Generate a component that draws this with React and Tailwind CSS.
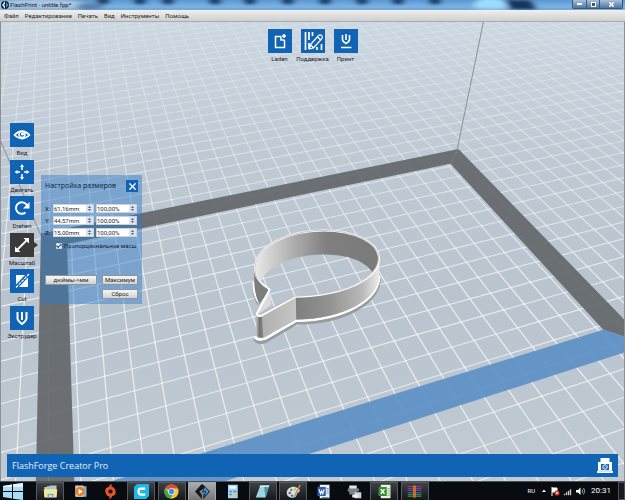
import { Check, X } from 'lucide-react'

// grid cell -> screen, perspective of the build plate
function project(i, j) {
  const u = (i + 0.2) / 20.4
  const v = (j + 0.2) / 12.4
  const w = 1 + 0.1779 * u - 0.3262 * v
  return [
    (463.5 * u - 16.7 * v + 67) / w,
    (-51.05 * u + 88.1 * v + 243.4) / w,
  ].map((n) => Math.round(n * 10) / 10)
}

const line = (a, b) => `M${project(...a)}L${project(...b)}`
const poly = (...pts) => pts.map((p) => project(...p).join(',')).join(' ')

const range = (from, to) => Array.from({ length: to - from + 1 }, (_, k) => from + k)
const columns = range(-8, 50).map((i) => line([i, -40], [i, 19])).join('')
const rows = range(-40, 19).map((j) => line([-8, j], [50, j])).join('')

const IN = [-0.2, 20.2, -0.2, 12.2]
const OUT = [-1.38, 21.38, -1.38, 13.38]

const menu = ['Файл', 'Редактирование', 'Печать', 'Вид', 'Инструменты', 'Помощь']

function Cutter() {
  return (
    <g transform="translate(235 215) scale(.3333)" strokeLinejoin="round">
      {/* bottom flange */}
      <path d="M57 208C56 235 62 252 71 266M433 190C432 262 330 322 185 323L92 378Q66 386 59 370" fill="none" stroke="#999b9c" strokeWidth="9" />
      <path d="M56 200C55 230 62 248 73 262M433 182C430 254 330 314 184 316L92 369Q66 377 60 364" fill="none" stroke="#fff" strokeWidth="7" />
      {/* inner back wall */}
      <path d="M60 160C66 92 160 45 265 45C360 45 431 80 431 130C431 150 425 165 415 175C395 138 340 117 265 117C180 117 100 150 80 195C68 184 60 172 60 160Z" fill="url(#inner)" />
      {/* left outside wall */}
      <path d="M58 165C62 190 80 210 104 224L73 265C60 240 56 210 58 165Z" fill="#7d7d7d" />
      <path d="M104 224L109 267L76 292L68 292Z" fill="#dcdcdc" />
      {/* front wall */}
      <path d="M433 130C433 190 330 243 182 245L183 312C330 310 430 250 433 182Z" fill="url(#front)" />
      <path d="M182 245L80 302L84 366L184 312Z" fill="url(#tail)" />
      <path d="M63 300L81 302L85 366Q70 370 64 360Z" fill="url(#tip)" />
      {/* rim */}
      <path d="M104 222C80 208 58 185 60 155C65 90 160 45 265 45C360 45 432 80 432 130C430 190 330 240 180 244L80 300Q66 305 66 294Z" fill="none" stroke="#fff" strokeWidth="6" />
      <path d="M99 222C76 206 59 190 60 155C65 90 160 45 265 45C360 45 431 80 431 128C428 190 330 238 180 242L76 297" fill="none" stroke="#8d8d8d" strokeWidth="1.500" />
    </g>
  )
}

function Scene() {
  return (
    <svg className="absolute inset-0 h-full w-full" viewBox="0 21 625 460" preserveAspectRatio="xMidYMid slice" aria-hidden="true">
      <defs>
        <linearGradient id="floor" x1="0" y1="0" x2="0" y2="1">
          <stop offset="0" stopColor="#cbd7e1" />
          <stop offset=".3" stopColor="#bfc9d4" />
          <stop offset=".6" stopColor="#bac4cf" />
          <stop offset="1" stopColor="#c0cad2" />
        </linearGradient>
        <linearGradient id="grid" gradientUnits="userSpaceOnUse" x1="0" y1="21" x2="0" y2="300">
          <stop offset="0" stopColor="#fff" stopOpacity=".16" />
          <stop offset=".4" stopColor="#fff" stopOpacity=".34" />
          <stop offset="1" stopColor="#fff" stopOpacity=".66" />
        </linearGradient>
        <linearGradient id="inner">
          <stop offset="0" stopColor="#e8e8e8" />
          <stop offset=".3" stopColor="#b0b0b0" />
          <stop offset=".58" stopColor="#7f7f7f" />
          <stop offset="1" stopColor="#7a7a7a" />
        </linearGradient>
        <linearGradient id="front">
          <stop offset="0" stopColor="#7f7f7f" />
          <stop offset=".4" stopColor="#929292" />
          <stop offset=".8" stopColor="#bababa" />
          <stop offset="1" stopColor="#ececec" />
        </linearGradient>
        <linearGradient id="tail">
          <stop offset="0" stopColor="#b0b0b0" />
          <stop offset="1" stopColor="#c6c6c6" />
        </linearGradient>
        <linearGradient id="tip">
          <stop offset="0" stopColor="#c0c0c0" />
          <stop offset=".5" stopColor="#707070" />
          <stop offset="1" stopColor="#8a8a8a" />
        </linearGradient>
      </defs>
      <rect y="21" width="625" height="460" fill="url(#floor)" />
      <path d={columns} stroke="url(#grid)" strokeWidth="1.3" fill="none" />
      <path d={rows} stroke="url(#grid)" strokeWidth="1.1" fill="none" />
      {/* plate border */}
      <g fill="#64686c" fillOpacity=".93">
        <polygon points={poly([OUT[0], OUT[2]], [OUT[1], OUT[2]], [IN[1], IN[2]], [IN[0], IN[2]])} />
        <polygon points={poly([OUT[0], OUT[2]], [IN[0], IN[2]], [IN[0], IN[3]], [OUT[0], OUT[3]])} />
        <polygon points={poly([OUT[1], OUT[2]], [OUT[1], OUT[3]], [IN[1], IN[3]], [IN[1], IN[2]])} />
      </g>
      <polygon fill="#5a8fc4" fillOpacity=".9" points={poly([IN[0], IN[3]], [IN[1], IN[3]], [OUT[1], OUT[3]], [OUT[0], OUT[3]])} />
      <path d="M483.500 21L457 149.500M0 139L41 235" stroke="#8a9096" fill="none" />
      <path d="M48.500 470V481" stroke="#3fae4a" />
      <Cutter />
      <path d="M.5 21V481M624.500 21V481" stroke="#8b9196" />
    </svg>
  )
}

const icons = {
  load: <path d="M13 7.500H7.500V18.500H16.500V11M13 7.500V11H16.500M16 5V9M14 7H18" />,
  support: (
    <>
      <path d="M4.500 3V21M8 3V11M8 14V20M11.500 3V7M16 18V21M20.500 15V21" strokeWidth="1.700" />
      <path d="M8.500 20L9.500 15.500L17.500 6.500Q19.500 5 21 7Q22 8.500 20.500 10L12.500 19ZM9.500 15.500L12.500 19M16.500 7.500L19.500 11" strokeWidth="1.200" />
    </>
  ),
  print: <path d="M8.500 6V10.500Q8.500 12.500 12 14.500Q15.500 12.500 15.500 10.500V6M12 5V11M7 18.500H17.500" strokeWidth="1.600" />,
  view: (
    <>
      <path d="M4.500 12Q12 4.500 19.500 12Q12 19 4.500 12Z" strokeWidth="1.700" />
      <circle cx="12" cy="11.500" r="3" />
      <circle cx="12.500" cy="11" r=".8" fill="white" />
    </>
  ),
  move: (
    <>
      <path d="M12 6V10M12 14V18M6 12H10M14 12H18" />
      <path d="M12 4L14 7H10ZM12 20L14 17H10ZM4.500 12L7.500 10V14ZM19.500 12L16.500 10V14Z" fill="white" stroke="none" />
    </>
  ),
  rotate: (
    <>
      <path d="M15.500 16.500A5.800 5.800 0 1 1 17.200 10" strokeWidth="2" />
      <path d="M19.500 6V12.500H13Z" fill="white" stroke="none" />
    </>
  ),
  scale: (
    <>
      <path d="M7.500 16.500L16.500 7.500" strokeWidth="1.800" />
      <path d="M19 5V10.500L13.500 5ZM5 19V13.500L10.500 19Z" fill="white" stroke="none" />
    </>
  ),
  cut: (
    <>
      <path d="M6 6H15L6 15.500ZM18 8.500V18H9Z" fill="white" stroke="none" />
      <path d="M6 18.500L19 5" strokeWidth="1.200" strokeDasharray="3 1" />
    </>
  ),
  extruder: <path d="M7.500 6V12.500Q7.500 14.500 12 18Q16.500 14.500 16.500 12.500V6M12 6V14" strokeWidth="2" />,
}

function Tool({ icon, label, active }) {
  return (
    <button type="button" className="relative flex w-[24px] flex-col items-center">
      <span className={active ? 'bg-[#3a3a3a]' : 'bg-[#1164b4]'}>
        <svg viewBox="0 0 24 24" className="block size-[24px]" fill="none" stroke="white" strokeWidth="1.500">
          {icons[icon]}
        </svg>
      </span>
      {active && <span className="absolute top-[9px] left-full border-y-3 border-l-4 border-y-transparent border-l-[#3a3a3a]" />}
      <span className="mt-[2px] text-[6px] leading-[8px] whitespace-nowrap text-[#15191d]">{label}</span>
    </button>
  )
}

function Spin({ label, value }) {
  return (
    <span className="flex h-[9px] min-w-0 flex-1 border border-[#c9d3dd] bg-white">
      <input type="text" aria-label={label} defaultValue={value} className="w-0 min-w-0 flex-1 text-[6px] leading-[7px] text-[#1c2733]" />
      <span className="flex w-[7px] flex-col bg-[#dfe3e8]">
        <button type="button" aria-label={`${label} +`} className="flex h-1/2 items-center justify-center">
          <svg viewBox="0 0 5 3" className="h-[2px] w-[3px]" fill="#3d5c9c"><path d="M0 3L2.500 0L5 3Z" /></svg>
        </button>
        <button type="button" aria-label={`${label} −`} className="flex h-1/2 items-center justify-center">
          <svg viewBox="0 0 5 3" className="h-[2px] w-[3px]" fill="#3d5c9c"><path d="M0 0L2.500 3L5 0Z" /></svg>
        </button>
      </span>
    </span>
  )
}

function PanelButton({ children, className = '' }) {
  return (
    <button type="button" className={`h-[10px] border border-[#8d959c] bg-linear-to-b from-[#f6f6f6] to-[#d2d2d2] text-[6px] leading-[8px] whitespace-nowrap text-[#222] ${className}`}>
      {children}
    </button>
  )
}

function SizePanel() {
  const fields = [['X', '61,16mm'], ['Y', '44,57mm'], ['Z', '15,00mm']]
  return (
    <section className="mt-[52px] ml-[7px] h-[129px] w-[101px] bg-[#2b7ac7]/45 px-[4px] pt-[4px]">
      <header className="flex items-center justify-between">
        <h2 className="font-['Open_Sans','Noto_Sans',sans-serif] text-[7px] leading-[14px] whitespace-nowrap text-[#0f2237]">Настройка размеров</h2>
        <button type="button" aria-label="Закрыть" className="flex size-[12px] items-center justify-center bg-[#1164b4]">
          <X size={11} strokeWidth={3} color="white" />
        </button>
      </header>
      <div className="mt-[11px] flex flex-col gap-[3px] pr-[1px]">
        {fields.map(([axis, value]) => (
          <div key={axis} className="flex items-center gap-[2px]">
            <span className="w-[6px] text-[6px] leading-[9px] text-[#0f2237]">{axis}:</span>
            <Spin label={axis} value={value} />
            <Spin label={`${axis} %`} value="100,00%" />
          </div>
        ))}
      </div>
      <label className="mt-[4px] ml-[11px] flex items-center gap-[2px] text-[6px] leading-[10px] whitespace-nowrap text-[#0f2237]">
        <span className="relative size-[6px] shrink-0">
          <input type="checkbox" defaultChecked className="peer block size-[6px] appearance-none border border-[#c3ccd6] bg-white" />
          <Check className="pointer-events-none absolute inset-0 hidden peer-checked:block" size={6} strokeWidth={5} color="#33549a" />
        </span>
        Пропорциональное масш
      </label>
      <div className="mt-[24px] grid grid-cols-[52px_36px] justify-between gap-y-[4px]">
        <PanelButton>дюймы-&gt;мм</PanelButton>
        <PanelButton>Максимум</PanelButton>
        <PanelButton className="col-start-2">Сброс</PanelButton>
      </div>
    </section>
  )
}

function TitleBar() {
  return (
    <header className="relative flex h-[10px] shrink-0 items-center overflow-hidden bg-[#78b1e6]">
      <svg className="absolute inset-0 h-full w-full" viewBox="0 0 625 10" preserveAspectRatio="none" aria-hidden="true">
        <defs>
          <linearGradient id="sky" x1="0" y1="0" x2="0" y2="1">
            <stop offset="0" stopColor="#5c96cf" />
            <stop offset="1" stopColor="#8dc4f3" />
          </linearGradient>
          <filter id="soft" x="-10%" y="-100%" width="120%" height="300%">
            <feGaussianBlur stdDeviation="3 1.500" />
          </filter>
        </defs>
        <rect width="625" height="10" fill="url(#sky)" />
        <g filter="url(#soft)">
          <ellipse cx="40" cy="5" rx="48" ry="6" fill="#a9c6e2" />
          <ellipse cx="90" cy="6" rx="14" ry="3" fill="#5a83ad" />
          {[103, 140, 168, 215, 250, 288, 325, 362, 398, 435].map((x) => (
            <ellipse key={x} cx={x} cy="1" rx="6" ry="3.500" fill="#173a63" />
          ))}
          <ellipse cx="490" cy="5" rx="16" ry="7" fill="#9bdcff" />
          <path d="M504 0H530L537 10H512Z" fill="#16355c" />
          <path d="M0 10H625V9H0Z" fill="#2c5f92" />
        </g>
      </svg>
      <svg className="relative ml-[1px] size-[8px]" viewBox="0 0 8 8" aria-hidden="true">
        <rect width="8" height="8" rx="4" fill="#0d1b29" />
        <path d="M4 0L1 4L4 8V5L3 4L4 3Z" fill="#dbe9f5" />
        <path d="M5 1L7.500 4L5 7Z" fill="#3a8fd6" />
      </svg>
      <h1 className="relative ml-[1px] text-[6px] leading-[10px] whitespace-nowrap text-[#0c1722]">FlashPrint - untitle.fpp*</h1>
      <div className="relative mr-[2px] ml-auto flex h-[9px] self-start rounded-b-xs border border-t-0 border-[#3c5876] bg-linear-to-b from-[#a9c1da] to-[#50779f]">
        <button type="button" aria-label="Свернуть" className="flex w-[14px] items-center justify-center border-r border-[#3c5876]">
          <span className="h-[2px] w-[5px] bg-white" />
        </button>
        <button type="button" aria-label="Развернуть" className="flex w-[13px] items-center justify-center border-r border-[#3c5876]">
          <span className="size-[5px] border border-white bg-[#3c5876]" />
        </button>
        <button type="button" aria-label="Закрыть окно" className="flex w-[22px] items-center justify-center">
          <X size={7} strokeWidth={5} color="white" />
        </button>
      </div>
    </header>
  )
}

const tasks = [
  {
    name: 'Проводник', open: true, art: (
      <>
        <path d="M2 4H8L9 2H18V17H2Z" fill="#e9c964" />
        <path d="M5 3H16V9H5Z" fill="#8fd0ea" />
        <path d="M1 7H19L18 18H2Z" fill="#f8e6a0" />
        <path d="M6 18V13H14V18H12V15H8V18Z" fill="#63b4de" />
      </>
    ),
  },
  {
    name: 'Плеер', art: (
      <>
        <path d="M5 3H18V17H5Z" fill="#79b5de" />
        <path d="M3 2H14V17H3Z" fill="#b9dcf0" />
        <circle cx="9.500" cy="10" r="6.300" fill="#ee7c1b" />
        <path d="M7.500 6.500L13 10L7.500 13.500Z" fill="#fff" />
      </>
    ),
  },
  {
    name: 'Origin', art: (
      <>
        <path d="M12 0C9 1 8 2 8 4C3 4 2 9 4 13C5 16 8 17 9 17L8 20C11 19 12 18 12 16C17 16 18 11 16 7C15 5 13 4 11 3Z" fill="#e4562b" />
        <circle cx="10" cy="10" r="2.800" fill="#090c0f" />
      </>
    ),
  },
  {
    name: 'Cura', open: true, art: (
      <>
        <path d="M4 0H20V16L16 20H0V4Z" fill="#1fb7e3" />
        <path d="M15 6H9Q6 6 6 10Q6 14 9 14H15" fill="none" stroke="#fff" strokeWidth="3" />
      </>
    ),
  },
  {
    name: 'Chrome', open: true, art: (
      <>
        <circle cx="10" cy="10" r="9.500" fill="#f3c62f" />
        <path d="M10 10L1.800 5.300A9.500 9.500 0 0 1 18.600 6H10Z" fill="#dd4b3c" />
        <path d="M1.800 5.300A9.500 9.500 0 0 0 8.500 19.400L13 12L6 12Z" fill="#3aa757" />
        <circle cx="10" cy="10" r="4.500" fill="#fff" />
        <circle cx="10" cy="10" r="3.600" fill="#4285f4" />
      </>
    ),
  },
  {
    name: 'FlashPrint', open: true, current: true, art: (
      <>
        <path d="M9 0L0 10L9 20L9 14L6 10L12 6V2Z" fill="#15191d" />
        <path d="M11 1L20 10L11 20V15L14 10L9 12L12 5Z" fill="#15191d" />
        <path d="M13 4L18.500 10L12 17L15 9L11 10Z" fill="#3d94dc" />
      </>
    ),
  },
  {
    name: 'Калькулятор', art: (
      <>
        <path d="M4 1H17V19H4Z" fill="#a9d3ee" />
        <path d="M6 3H15V6H6Z" fill="#f5fbff" />
        <path d="M6 9H9V11H6ZM6 13H9V15H6ZM11 9H15V11H11Z" fill="#4a86b8" />
        <path d="M11 13H15V17H11Z" fill="#e7c860" />
      </>
    ),
  },
  {
    name: 'Блокнот', open: true, art: (
      <>
        <path d="M7 2H19L14 18H1Z" fill="#9bd5de" />
        <path d="M12 2H19L14 18Z" fill="#4f95a5" />
        <path d="M7 2H19L18.500 4H6Z" fill="#e3edf0" />
      </>
    ),
  },
  {
    name: 'Paint', open: true, art: (
      <>
        <path d="M1 12C1 6 7 3 12 4C18 5 20 9 17 11C14 12 15 14 13 17C9 20 1 18 1 12Z" fill="#cbe2f1" />
        <circle cx="5" cy="12" r="1.800" fill="#d4472b" />
        <circle cx="7" cy="8" r="1.600" fill="#4ba643" />
        <circle cx="12" cy="7" r="1.600" fill="#f0b92b" />
        <circle cx="8" cy="15.500" r="1.600" fill="#3372c0" />
        <path d="M19 1L11 17" stroke="#c68b46" strokeWidth="2" />
      </>
    ),
  },
  {
    name: 'Word', art: (
      <>
        <path d="M5 1H18V19H5Z" fill="#e8f0fb" />
        <path d="M2 4H13V16H2Z" fill="#2e5cab" />
        <path d="M4 7L6 13L7.500 9L9 13L11 7" fill="none" stroke="#fff" strokeWidth="1.500" />
        <path d="M14 6H17M14 9H17M14 12H17M8 18H17" stroke="#4473bb" />
      </>
    ),
  },
  {
    name: 'Факс', art: (
      <>
        <path d="M3 2H13V7H3Z" fill="#dfe5e8" />
        <path d="M1 6H16V10H1ZM3 10H13V14H3Z" fill="#78848a" />
        <path d="M10 11H19V19H10Z" fill="#c6d5dc" />
        <path d="M7 14H14V18H7Z" fill="#edf2f4" />
      </>
    ),
  },
  {
    name: 'Excel', open: true, art: (
      <>
        <path d="M5 1H18V19H5Z" fill="#e5f2df" />
        <path d="M2 4H13V16H2Z" fill="#3c8a35" />
        <path d="M5 7L10 13M10 7L5 13" stroke="#fff" strokeWidth="1.800" />
        <path d="M14 6H17M14 9H17M14 12H17M14 15H17" stroke="#5aa04f" />
      </>
    ),
  },
  {
    name: 'WinRAR', open: true, art: (
      <>
        <path d="M1 3H19V7H1Z" fill="#b63a9e" />
        <path d="M1 8H19V12H1Z" fill="#3559b5" />
        <path d="M1 13H19V17H1Z" fill="#3f9b43" />
        <path d="M1 5H19M1 10H19M1 15H19" stroke="#1a1620" />
        <path d="M8 2H12V18H8Z" fill="#c5702a" />
      </>
    ),
  },
]

function TaskBar() {
  return (
    <footer className="flex h-[19px] shrink-0 items-center border-t border-[#4b5157] bg-[#080b0f] text-white">
      <button type="button" aria-label="Пуск" className="ml-[3px] w-[33px]">
        <svg viewBox="0 0 20 17" className="h-[17px] w-[20px]">
          <path d="M0 3L9 1.500V8H0ZM10 1.300L20 0V8H10ZM0 9H9V15.500L0 14ZM10 9H20V17L10 15.700Z" fill="#a9dcf6" />
          <path d="M0 3L9 1.500V4H0ZM10 1.300L20 0V4H10Z" fill="#e6f6fe" />
        </svg>
      </button>
      <nav className="flex h-full w-[393px] justify-between">
        {tasks.map(({ name, open, current, art }) => (
          <button
            key={name}
            type="button"
            aria-label={name}
            className={`flex w-[28px] items-center justify-center ${
              current ? 'border border-b-0 border-[#a2a6aa] bg-linear-to-b from-[#a9adb0] to-[#74787b]'
                : open ? 'border border-b-0 border-[#555a5f] bg-linear-to-b from-[#3d4145] to-[#15181b]' : ''
            }`}
          >
            <svg viewBox="0 0 20 20" className="size-[15px]">{art}</svg>
          </button>
        ))}
      </nav>
      <div className="ml-auto flex h-full items-center">
        <span className="text-[6px] leading-[8px]">RU</span>
        <svg viewBox="0 0 48 10" className="ml-[6px] h-[10px] w-[50px]" aria-hidden="true">
          <path d="M0 6L2 3.500L4 6Z" fill="#fff" />
          <path d="M10 1V10M10 2H15V6H10" stroke="#fff" fill="#fff" />
          <circle cx="15" cy="7" r="2.600" fill="#d8322a" />
          <path d="M14 6L16 8M16 6L14 8" stroke="#fff" strokeWidth=".7" />
          <path d="M22 9V8H23V9ZM24 9V6.500H25V9ZM26 9V5H27V9ZM28 9V3.500H29V9Z" fill="#e8e8e8" stroke="#aaa" strokeWidth=".5" />
          <path d="M34 4H36L38.500 1.500V9L36 6.500H34Z" fill="#fff" />
          <path d="M40 3.500Q41.500 5 40 7M41.500 2Q44 5 41.500 8.500" stroke="#ddd" strokeWidth=".7" fill="none" />
        </svg>
        <time className="text-[8px] leading-[10px]">20:31</time>
        <button type="button" aria-label="Рабочий стол" className="ml-[7px] h-full w-[7px] border border-[#4b5157] bg-[#171b20]" />
      </div>
    </footer>
  )
}

export default function App() {
  return (
    <div className="flex h-screen flex-col overflow-hidden font-['Roboto','Noto_Sans',sans-serif]">
      <TitleBar />
      <nav className="flex h-[12px] shrink-0 items-center gap-[6px] border-b border-[#a9adb0] bg-linear-to-b from-[#f0f0f0] to-[#cfcfcf] pl-[4px] text-[6px] leading-[10px] text-[#1b1b1b]">
        {menu.map((item) => (
          <button key={item} type="button">{item}</button>
        ))}
      </nav>
      <main className="relative flex min-h-0 flex-1 flex-col">
        <Scene />
        <div className="relative mt-[7px] flex justify-center gap-[9px]">
          <Tool icon="load" label="Laden" />
          <Tool icon="support" label="Поддержка" />
          <Tool icon="print" label="Принт" />
        </div>
        <div className="relative mt-[60px] flex flex-1 items-start pl-[10px]">
          <div className="flex h-[217px] flex-col justify-between">
            <Tool icon="view" label="Вид" />
            <Tool icon="move" label="Двигать" />
            <Tool icon="rotate" label="Drehen" />
            <Tool icon="scale" label="Масштаб" active />
            <Tool icon="cut" label="Cut" />
            <Tool icon="extruder" label="Экструдер" />
          </div>
          <SizePanel />
        </div>
        <div className="relative mx-[7px] mb-[4px] flex h-[23px] shrink-0 items-center justify-between bg-[#1164b4] px-[5px]">
          <span className="font-['Open_Sans','Noto_Sans',sans-serif] text-[9px] leading-[12px] text-[#e4eef8]">FlashForge Creator Pro</span>
          <button type="button" aria-label="Принтер">
            <svg viewBox="0 0 16 17" className="h-[17px] w-[16px]">
              <path d="M3.500 1H12.500V5H15V14H16V16H0V14H1V5H3.500Z" fill="white" />
              <path d="M4 7H12V13H4Z" fill="#1164b4" />
              <circle cx="8" cy="10" r="2.200" fill="none" stroke="white" />
              <path d="M5.500 12.500L10.500 7.500M2 14H14" stroke="#8db9e2" strokeWidth=".8" />
            </svg>
          </button>
        </div>
      </main>
      <TaskBar />
    </div>
  )
}
